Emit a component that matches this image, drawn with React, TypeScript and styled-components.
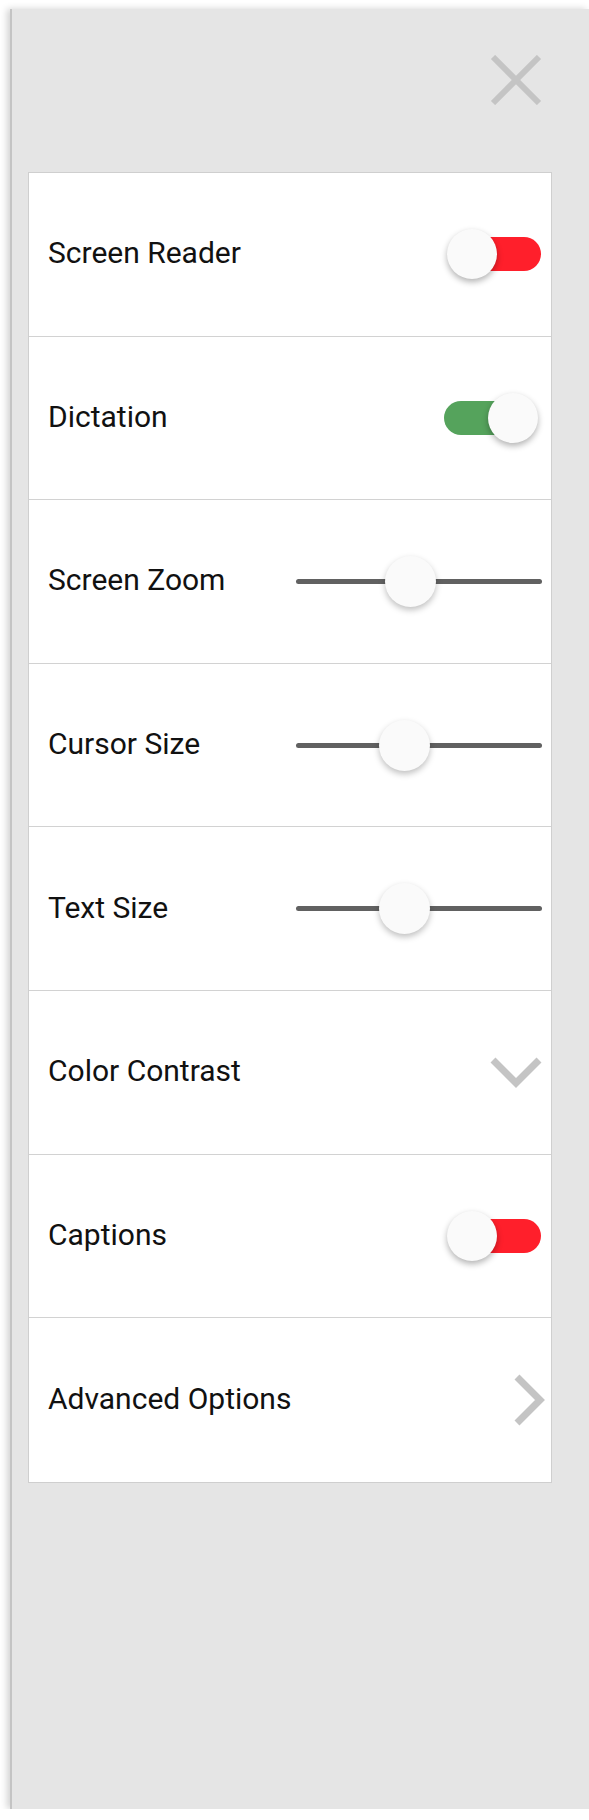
import styled, { createGlobalStyle } from 'styled-components'

const GlobalStyle = createGlobalStyle`
	html, body {
		margin: 0;
		padding: 0;
		background: #fff;
	}
	body {
		font-family: 'Roboto', 'Liberation Sans', sans-serif;
	}
`

type Setting =
	| { label: string; kind: 'toggle'; on: boolean }
	| { label: string; kind: 'slider'; value: number }
	| { label: string; kind: 'select' }
	| { label: string; kind: 'link' }

const settings: Setting[] = [
	{ label: 'Screen Reader', kind: 'toggle', on: false },
	{ label: 'Dictation', kind: 'toggle', on: true },
	{ label: 'Screen Zoom', kind: 'slider', value: 0.467 },
	{ label: 'Cursor Size', kind: 'slider', value: 0.44 },
	{ label: 'Text Size', kind: 'slider', value: 0.44 },
	{ label: 'Color Contrast', kind: 'select' },
	{ label: 'Captions', kind: 'toggle', on: false },
	{ label: 'Advanced Options', kind: 'link' }
]

const Toggle = ({ on }: { on: boolean }): JSX.Element => (
	<Switch $on={on}>
		<Track $on={on} />
		<Knob $on={on} />
	</Switch>
)

const Slider = ({ value }: { value: number }): JSX.Element => (
	<SliderTrack>
		<Thumb style={{ left: `${value * 100}%` }} />
	</SliderTrack>
)

const Control = ({ setting }: { setting: Setting }): JSX.Element => {
	switch (setting.kind) {
		case 'toggle':
			return <Toggle on={setting.on} />
		case 'slider':
			return <Slider value={setting.value} />
		case 'select':
			return (
				<Icon width="52" height="32" viewBox="0 0 52 32" $right={9}>
					<polyline points="3,4 26,27 49,4" fill="none" stroke="#c4c4c4" strokeWidth="7" />
				</Icon>
			)
		case 'link':
			return (
				<Icon width="32" height="52" viewBox="0 0 32 52" $right={6}>
					<polyline points="4,3 27,26 4,49" fill="none" stroke="#c4c4c4" strokeWidth="7" />
				</Icon>
			)
	}
}

export default function App(): JSX.Element {
	return (
		<>
			<GlobalStyle />
			<Panel>
				<Header>
					<CloseButton aria-label="Close">
						<svg width="52" height="50" viewBox="0 0 52 50">
							<line x1="3" y1="2" x2="49" y2="48" stroke="#c4c4c4" strokeWidth="6" />
							<line x1="49" y1="2" x2="3" y2="48" stroke="#c4c4c4" strokeWidth="6" />
						</svg>
					</CloseButton>
				</Header>
				<Card>
					{settings.map((s) => (
						<Row key={s.label}>
							<Label>{s.label}</Label>
							<Control setting={s} />
						</Row>
					))}
				</Card>
			</Panel>
		</>
	)
}

const Panel = styled.div`
	margin: 9px 0 0 10px;
	width: 579px;
	height: 1800px;
	box-sizing: border-box;
	background: #e5e5e5;
	border-left: 2px solid #c4c4c4;
	box-shadow: -3px 0 7px rgba(0, 0, 0, 0.18);
`

const Header = styled.div`
	height: 163px;
	box-sizing: border-box;
	display: flex;
	justify-content: flex-end;
	align-items: flex-start;
	padding: 46px 47px 0 0;
`

const CloseButton = styled.button`
	border: none;
	background: transparent;
	padding: 0;
	cursor: pointer;
	display: flex;
`

const Card = styled.div`
	margin-left: 16px;
	width: 524px;
	box-sizing: border-box;
	background: #fff;
	border: 1px solid #cfcfcf;
	display: flex;
	flex-direction: column;
`

const Row = styled.div`
	height: 163.6px;
	box-sizing: border-box;
	display: flex;
	align-items: center;
	justify-content: space-between;
	padding: 0 9px 0 19px;
	border-bottom: 1px solid #d2d2d2;
	&:last-child {
		border-bottom: none;
	}
`

const Label = styled.span`
	font-family: 'Roboto', 'Liberation Sans', sans-serif;
	font-size: 30px;
	color: #111;
	margin-bottom: 3px;
`

const Switch = styled.div<{ $on: boolean }>`
	position: relative;
	width: 94px;
	height: 50px;
	margin-right: ${(p) => (p.$on ? 4 : 1)}px;
`

const Track = styled.div<{ $on: boolean }>`
	position: absolute;
	top: 8px;
	left: ${(p) => (p.$on ? '0' : '8px')};
	width: 86px;
	height: 34px;
	border-radius: 17px;
	background: ${(p) => (p.$on ? '#55a35c' : '#ff1f2b')};
`

const Knob = styled.div<{ $on: boolean }>`
	position: absolute;
	top: 0;
	left: ${(p) => (p.$on ? '44px' : '0')};
	width: 50px;
	height: 50px;
	border-radius: 50%;
	background: #fafafa;
	box-shadow: 0 3px 6px rgba(0, 0, 0, 0.3);
`

const SliderTrack = styled.div`
	position: relative;
	width: 246px;
	height: 5px;
	border-radius: 3px;
	background: #616161;
`

const Thumb = styled.div`
	position: absolute;
	top: 50%;
	width: 51px;
	height: 51px;
	margin: -25.5px 0 0 -25.5px;
	border-radius: 50%;
	background: #fafafa;
	box-shadow: 0 3px 6px rgba(0, 0, 0, 0.25);
`

const Icon = styled.svg<{ $right: number }>`
	display: block;
	margin-right: ${(p) => p.$right - 9}px;
`
